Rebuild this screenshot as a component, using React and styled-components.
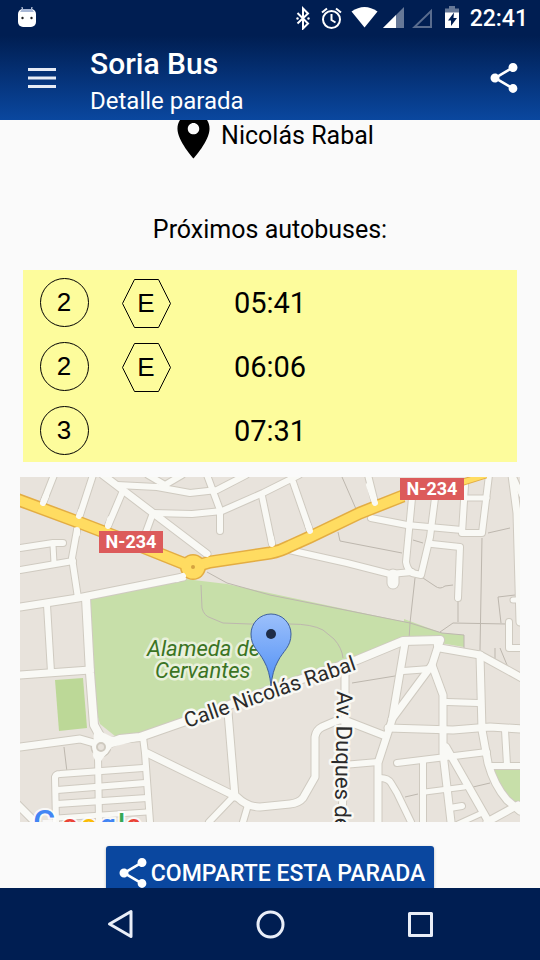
import styled, { createGlobalStyle } from "styled-components"

const buses = [
  { line: "2", type: "E", time: "05:41" },
  { line: "2", type: "E", time: "06:06" },
  { line: "3", type: null, time: "07:31" },
]

// [path, width]
const streets = [
  ["M54 475L43 503", 6],
  ["M93 475L79 518L77 530L72 558L78 598", 6],
  ["M122 493L108 526", 6],
  ["M103 475L153 513L207 554", 7],
  ["M153 513L146 532", 6],
  ["M117 485L157 487L190 493L217 490L246 475", 6],
  ["M148 475L165 485L182 475", 6],
  ["M207 475L220 510V531", 6],
  ["M153 513L192 514L222 511L263 493L299 475", 6],
  ["M262 496L272 544", 6],
  ["M293 482L310 531", 6],
  ["M368 475L375 503", 6],
  ["M371 518L407 525L462 530", 6],
  ["M412 498L406 562Q407 569 412 573L421 575L430 537L435 498", 6],
  ["M289 550L347 563L390 574L412 572", 6],
  ["M393 575V583", 11],
  ["M432 544L460 547L458 598", 6],
  ["M465 485L462 533H482L489 475", 6],
  ["M465 498H487", 5],
  ["M512 475L517 513L520 622", 7],
  ["M514 478L523 498", 5],
  ["M20 607L78 598L183 577", 7],
  ["M20 548L53 543L63 543", 6],
  ["M53 545L54 563", 5],
  ["M20 570L73 561", 6],
  ["M47 605L51 672", 6],
  ["M86 598L90 673L94 725L105 745", 8],
  ["M20 675L90 670", 7],
  ["M20 747L80 739L101 745", 7],
  ["M101 747L120 739L140 737L183 722L270 690L357 660L403 641L440 640L438 645", 8],
  ["M98 755L99 822", 6],
  ["M143 737L145 753L150 822", 6],
  ["M147 753L237 797Q247 807 260 807L290 804Q299 803 303 798L315 777V737Q316 730 322 727L336 721Q341 719 347 721L383 735", 7],
  ["M228 712L235 797", 7],
  ["M232 798L209 822", 6],
  ["M248 805L243 822", 6],
  ["M56 822L55 777Q56 774 60 774L143 768", 6],
  ["M57 790L145 783", 6],
  ["M57 804L147 798", 6],
  ["M57 818L147 812", 5],
  ["M17 804L38 825", 7],
  ["M405 643L392 720L378 763V822", 7],
  ["M403 671L430 669", 6],
  ["M440 640L432 665L392 719", 7],
  ["M432 665L443 695V753L451 822", 7],
  ["M440 648L480 655L522 678", 7],
  ["M480 655L482 730L488 763Q494 785 507 800L520 811", 7],
  ["M447 702L478 703", 6],
  ["M388 728L453 730L490 727L522 729", 7],
  ["M505 730L507 765", 6],
  ["M490 766H522", 6],
  ["M397 763L487 752", 6],
  ["M343 765L378 762", 6],
  ["M380 778Q388 778 391 783L397 793L411 822", 6],
  ["M423 762V822", 6],
  ["M446 747L487 819", 7],
  ["M425 792L464 787", 5],
  ["M450 808L462 806", 6],
  ["M458 824L480 814", 5],
  ["M487 822L518 805", 7],
  ["M345 668V720L342 822", 7],
  ["M509 622V648H522", 6],
  ["M513 600H520", 5],
]

const footpaths = [
  "M207 572L227 583L270 595L410 623L442 633L464 635V648",
  "M415 578L410 623L409 640",
  "M482 538L480 650",
  "M458 600V622",
  "M440 632L453 623L507 624",
  "M342 477L356 509",
  "M338 532L340 541L402 553",
  "M423 578L435 586Q440 590 445 586L453 585",
  "M413 540L423 543",
  "M488 533L510 528",
  "M515 595L498 597L501 623",
  "M352 683L395 676",
  "M405 797L418 794",
  "M473 787L490 783",
  "M64 747L67 772",
  "M500 648L507 665M495 648V660",
]

const highway =
  "M16 499L78 522L130 542L180 562L193 567L210 562L270 553Q281 551 290 546L310 537L360 513L403 496"

const ShareIcon = () => (
  <svg width="36" height="36" viewBox="0 0 24 24" fill="currentColor" aria-hidden="true">
    <path d="M18 16.08c-.76 0-1.44.3-1.96.77L8.91 12.7c.05-.23.09-.46.09-.7s-.04-.47-.09-.7l7.05-4.11c.54.5 1.25.81 2.04.81 1.66 0 3-1.34 3-3s-1.34-3-3-3-3 1.34-3 3c0 .24.04.47.09.7L8.04 9.81C7.5 9.31 6.79 9 6 9c-1.66 0-3 1.34-3 3s1.34 3 3 3c.79 0 1.5-.31 2.04-.81l7.12 4.16c-.05.21-.08.43-.08.65 0 1.61 1.31 2.92 2.92 2.92s2.92-1.31 2.92-2.92-1.31-2.92-2.92-2.92z" />
  </svg>
)

const StatusIcons = () => (
  <svg width="164" height="24" viewBox="296 6 164 24" fill="#fff" aria-hidden="true">
    <path d="M297.500 13L308 23.500L303 28.500V8.500L308 13.500L297.500 23.500" fill="none" stroke="#fff" strokeWidth="2" />
    <circle cx="297.500" cy="18.500" r="1.200" />
    <circle cx="308.500" cy="18.500" r="1.200" />
    <g fill="none" stroke="#fff" strokeWidth="2">
      <circle cx="331.500" cy="19.500" r="8.500" />
      <path d="M331.500 14V20L335.500 22.500M322 12.500L327 8.500M341 12.500L336 8.500" />
    </g>
    <path d="M351.500 11.500Q364.500 2.500 377.500 11.500L364.500 27.500Z" />
    <path d="M404 7V28H383Z" opacity=".4" />
    <path d="M396 15V28H383Z" />
    <path d="M431 11V27H414.500Z" fill="none" stroke="#fff" strokeWidth="2" opacity=".35" />
    <path d="M449 6H455V8.500H459V13H445V8.500H449Z" opacity=".4" />
    <path fillRule="evenodd" d="M445 12.500H459V28H445ZM454 12.500L448 20.500H451V26L457 18H453.500Z" />
  </svg>
)

const AndroidHead = () => (
  <svg width="18" height="22" viewBox="0 0 18 22" aria-hidden="true">
    <path d="M4 0L5 5M14 0L13 5" stroke="#cbd3e4" strokeWidth="1.200" />
    <rect y="2" width="18" height="18" rx="5" fill="#fff" />
    <path d="M4 2H14L16 5H2Z" fill="#a9b8d6" />
    <circle cx="4.500" cy="11" r="1.200" fill="#222" />
    <circle cx="13.500" cy="11" r="1.200" fill="#222" />
  </svg>
)

const LineBadge = ({ children }) => (
  <Badge viewBox="0 0 50 50">
    <circle cx="25.500" cy="24.500" r="24" />
    <BadgeText x="25" y="33">{children}</BadgeText>
  </Badge>
)

const TypeBadge = ({ children }) => (
  <Badge viewBox="0 0 50 50">
    <path d="M13.500 1.500H37.500L49.500 25.500L37.500 49.500H13.500L1.500 25.500Z" />
    <BadgeText x="25" y="34">{children}</BadgeText>
  </Badge>
)

const StopMap = () => (
  <MapCanvas viewBox="20 477 500 345" role="img" aria-label="Calle Nicolás Rabal">
    <defs>
      <linearGradient id="marker" x1="0" y1="0" x2="0" y2="1">
        <stop offset="0" stopColor="#9cc0fb" />
        <stop offset="1" stopColor="#4f8ff5" />
      </linearGradient>
    </defs>
    <rect x="20" y="477" width="500" height="345" fill="#e8e3dc" />

    {/* parks */}
    <g fill="#c7dfa9">
      <path d="M88 600L185 579L227 584L410 623L404 637L383 647L183 720L140 734L115 736L100 724L93 700Z" />
      <path d="M404 619L442 633L464 635V647L440 643L438 637H404Z" />
      <path d="M55 680L83 678L87 728L59 731Z" fill="#bcd897" />
      <path d="M493 770H520V809L507 798Z" />
    </g>

    <g fill="none" stroke="#bdb7ae">
      {footpaths.map((d) => <path key={d} d={d} />)}
      <path d="M201 585L202 608Q204 616 211 618L223 623L250 624L290 624Q312 624 323 630L334 639Q342 648 343 658" />
    </g>

    {/* casings go first so that crossings stay open */}
    <g fill="none" stroke="#cfcac0" strokeLinecap="round" strokeLinejoin="round">
      {streets.map(([d, w]) => <path key={d} d={d} strokeWidth={w + 2} />)}
      <circle cx="101" cy="747" r="10" fill="#cfcac0" />
    </g>
    <g fill="none" stroke="#f9f9f5" strokeLinecap="round" strokeLinejoin="round">
      {streets.map(([d, w]) => <path key={d} d={d} strokeWidth={w} />)}
    </g>
    <path d="M94 728L112 737L140 734V740L112 747L103 758L98 766L93 756Z" fill="#f9f9f5" />
    <circle cx="101" cy="747" r="9" fill="#f9f9f5" />
    <circle cx="101" cy="747" r="4" fill="#e8e3dc" stroke="#cfcac0" strokeWidth="2" />

    {/* highway */}
    <path d={highway} fill="none" stroke="#e3ad43" strokeWidth="13" />
    <path d="M403 496L460 483L486 475" fill="none" stroke="#e3ad43" strokeWidth="7" />
    <circle cx="193" cy="567" r="13" fill="#e3ad43" />
    <path d={highway} fill="none" stroke="#ffdc61" strokeWidth="10" />
    <path d="M403 496L460 483L486 475" fill="none" stroke="#ffdc61" strokeWidth="5" />
    <circle cx="193" cy="567" r="11.500" fill="#ffdc61" />
    <circle cx="193" cy="567" r="2" fill="#d5a340" />
    <g fill="none" stroke="#f9f9f5" strokeWidth="6" strokeLinecap="round">
      <path d="M46 496L43 503M81 511L79 516M77 530V534M110 519L108 526M369 485L375 503M271 538L272 544M308 525L310 531M177 579L183 576M202 550L207 554" />
    </g>

    <rect x="99" y="531" width="64" height="22" fill="#dc5b5b" />
    <RoadShield x="131" y="548">N-234</RoadShield>
    <rect x="400" y="478" width="64" height="22" fill="#dc5b5b" />
    <RoadShield x="432" y="495">N-234</RoadShield>

    <ParkLabel x="147" y="656">Alameda de</ParkLabel>
    <ParkLabel x="155" y="678">Cervantes</ParkLabel>
    <StreetLabel transform="translate(187 728) rotate(-19)">Calle Nicolás Rabal</StreetLabel>
    <StreetLabel $large transform="translate(337 691) rotate(91)">Av. Duques de</StreetLabel>

    <path
      d="M271 686C270 676 268 668 264 661C259 651 251 647 251 634A20 20 0 0 1 291 634C291 647 283 651 278 661C274 668 272 676 271 686Z"
      fill="url(#marker)"
      stroke="#3d5f9f"
    />
    <circle cx="271" cy="634" r="5" fill="#1f2d48" />

    <MapLogo y="834">
      <LogoCapital x="33" fill="#4285f4">G</LogoCapital>
      <tspan x="62" fill="#ea4335">o</tspan>
      <tspan x="81" fill="#fbbc05">o</tspan>
      <tspan x="100" fill="#4285f4">g</tspan>
      <tspan x="118" fill="#34a853">l</tspan>
      <tspan x="126" fill="#ea4335">e</tspan>
    </MapLogo>
  </MapCanvas>
)

const App = () => {
  return (
    <Screen>
      <GlobalStyle />
      <Header>
        <StatusBar>
          <AndroidHead />
          <StatusRight>
            <StatusIcons />
            <Clock>22:41</Clock>
          </StatusRight>
        </StatusBar>
        <Toolbar>
          <IconButton $width={56} aria-label="Menú">
            <svg width="28" height="20" viewBox="0 0 28 20" fill="#e6ebf5" aria-hidden="true">
              <path d="M0 0H28V3H0ZM0 8.500H28V11.500H0ZM0 17H28V20H0Z" />
            </svg>
          </IconButton>
          <Titles>
            <Title>Soria Bus</Title>
            <Subtitle>Detalle parada</Subtitle>
          </Titles>
          <IconButton $width={64} aria-label="Compartir">
            <ShareIcon />
          </IconButton>
        </Toolbar>
      </Header>

      <Content>
        <StopName>
          <svg width="55" height="55" viewBox="0 0 24 24" aria-hidden="true">
            <path d="M12 2C8.130 2 5 5.130 5 9c0 5.250 7 13 7 13s7-7.750 7-13c0-3.870-3.130-7-7-7zm0 9.500c-1.380 0-2.500-1.120-2.500-2.500s1.120-2.500 2.500-2.500 2.500 1.120 2.500 2.500-1.120 2.500-2.500 2.500z" />
          </svg>
          <span>Nicolás Rabal</span>
        </StopName>
        <Heading id="next">Próximos autobuses:</Heading>
        <Table aria-labelledby="next">
          <colgroup>
            <Col $units={1} />
            <Col $units={1} />
            <Col $units={2} />
            <Col $units={2} />
          </colgroup>
          <tbody>
            {buses.map((bus) => (
              <tr key={bus.time}>
                <Cell><LineBadge>{bus.line}</LineBadge></Cell>
                <Cell>{bus.type && <TypeBadge>{bus.type}</TypeBadge>}</Cell>
                <Cell>{bus.time}</Cell>
                <Cell />
              </tr>
            ))}
          </tbody>
        </Table>
        <StopMap />
        <ShareButton>
          <ShareIcon />
          COMPARTE ESTA PARADA
        </ShareButton>
      </Content>

      <NavBar>
        <NavButton aria-label="Atrás">
          <svg width="30" height="30" viewBox="0 0 30 30" aria-hidden="true">
            <path d="M26 2.500V27.500L4.500 15Z" />
          </svg>
        </NavButton>
        <NavButton aria-label="Inicio">
          <svg width="30" height="30" viewBox="0 0 30 30" aria-hidden="true">
            <circle cx="15.500" cy="15.500" r="12.500" />
          </svg>
        </NavButton>
        <NavButton aria-label="Recientes">
          <svg width="30" height="30" viewBox="0 0 30 30" aria-hidden="true">
            <rect x="4.500" y="4.500" width="22" height="22" />
          </svg>
        </NavButton>
      </NavBar>
    </Screen>
  )
}

const GlobalStyle = createGlobalStyle`
  * {
    box-sizing: border-box;
  }

  body {
    margin: 0;
    font-family: Roboto, sans-serif;
    color: #000;
    background: #fafafa;
  }

  button {
    border: 0;
    font: inherit;
    color: inherit;
    background: none;
  }

  svg {
    display: block;
    flex: none;
  }
`;

const Screen = styled.div`
  display: flex;
  flex-direction: column;
  height: 100vh;
`;

const Header = styled.header`
  flex: none;
  color: white;
  background: linear-gradient(to bottom, #001e52 36px, #0a479f);
`;

const StatusBar = styled.div`
  display: flex;
  align-items: center;
  justify-content: space-between;
  height: 36px;
  padding-inline: 18px 12px;
`;

const StatusRight = styled.div`
  display: flex;
  align-items: center;
  gap: 10px;
`;

const Clock = styled.span`
  padding-top: 2px;
  font-size: 23px;
  font-weight: 500;
  line-height: 34px;
`;

const Toolbar = styled.div`
  display: flex;
  align-items: center;
  height: 84px;
  padding-inline: 14px 4px;
`;

const IconButton = styled.button`
  display: grid;
  place-items: center;
  width: ${({ $width }) => $width}px;
  height: 64px;
  padding: 0;
`;

const Titles = styled.div`
  flex: 1;
  padding-left: 20px;
  padding-top: 6px;
`;

const Title = styled.h1`
  margin: 0;
  font-size: 30px;
  font-weight: 500;
  line-height: 40px;
`;

const Subtitle = styled.p`
  margin: 0;
  font-size: 24px;
  line-height: 34px;
`;

const Content = styled.main`
  flex: 1;
  min-height: 0;
  overflow: hidden auto;
  scrollbar-width: none;
`;

const StopName = styled.div`
  display: flex;
  align-items: center;
  justify-content: center;
  margin-top: -12px;
  font-size: 25px;
`;

const Heading = styled.h2`
  margin: 51px 0 24px;
  font-size: 25px;
  font-weight: 400;
  line-height: 32px;
  text-align: center;
`;

const Table = styled.table`
  width: calc(100% - 46px);
  margin-inline: auto;
  table-layout: fixed;
  border-collapse: collapse;
  background: #fdfc9c;
`;

const Col = styled.col`
  width: calc(100% / 6 * ${({ $units }) => $units});
`;

const Cell = styled.td`
  height: 64px;
  padding: 1px 0 0;
  font-size: 29px;
  text-align: center;
`;

const Badge = styled.svg`
  width: 50px;
  height: 50px;
  margin-inline: auto;

  circle,
  path {
    fill: none;
    stroke: black;
  }
`;

const BadgeText = styled.text`
  font-family: "Liberation Sans", sans-serif;
  font-size: 26px;
  text-anchor: middle;
`;

const MapCanvas = styled.svg`
  width: calc(100% - 40px);
  margin: 15px auto 24px;
`;

const MapLabel = styled.text`
  font-size: ${({ $large }) => ($large ? 22 : 21)}px;
  paint-order: stroke;
  stroke-width: 5px;
  stroke-linejoin: round;
`;

const ParkLabel = styled(MapLabel)`
  font-size: 22px;
  font-style: italic;
  fill: #3b7423;
  stroke: #e9f1dc;
`;

const StreetLabel = styled(MapLabel)`
  fill: #2b2b2b;
  stroke: #f9f9f5;
`;

const RoadShield = styled.text`
  font-size: 18px;
  font-weight: 700;
  fill: white;
  text-anchor: middle;
`;

const MapLogo = styled.text`
  font-size: 28px;
  font-weight: 500;
  paint-order: stroke;
  stroke: #fffc;
  stroke-width: 4px;
`;

const LogoCapital = styled.tspan`
  font-size: 34px;
`;

const ShareButton = styled.button`
  display: flex;
  align-items: center;
  margin: 0 auto 16px;
  padding: 9px;
  border-radius: 3px;
  font-size: 23px;
  font-weight: 500;
  color: white;
  background: #0a479f;
  box-shadow: 0 1px 3px #0004;
`;

const NavBar = styled.nav`
  display: flex;
  justify-content: center;
  flex: none;
  height: 72px;
  background: #001e52;
`;

const NavButton = styled.button`
  display: grid;
  place-items: center;
  width: 150px;

  svg {
    fill: none;
    stroke: #e9eef8;
    stroke-width: 3px;
    stroke-linejoin: round;
  }
`;

export default App
